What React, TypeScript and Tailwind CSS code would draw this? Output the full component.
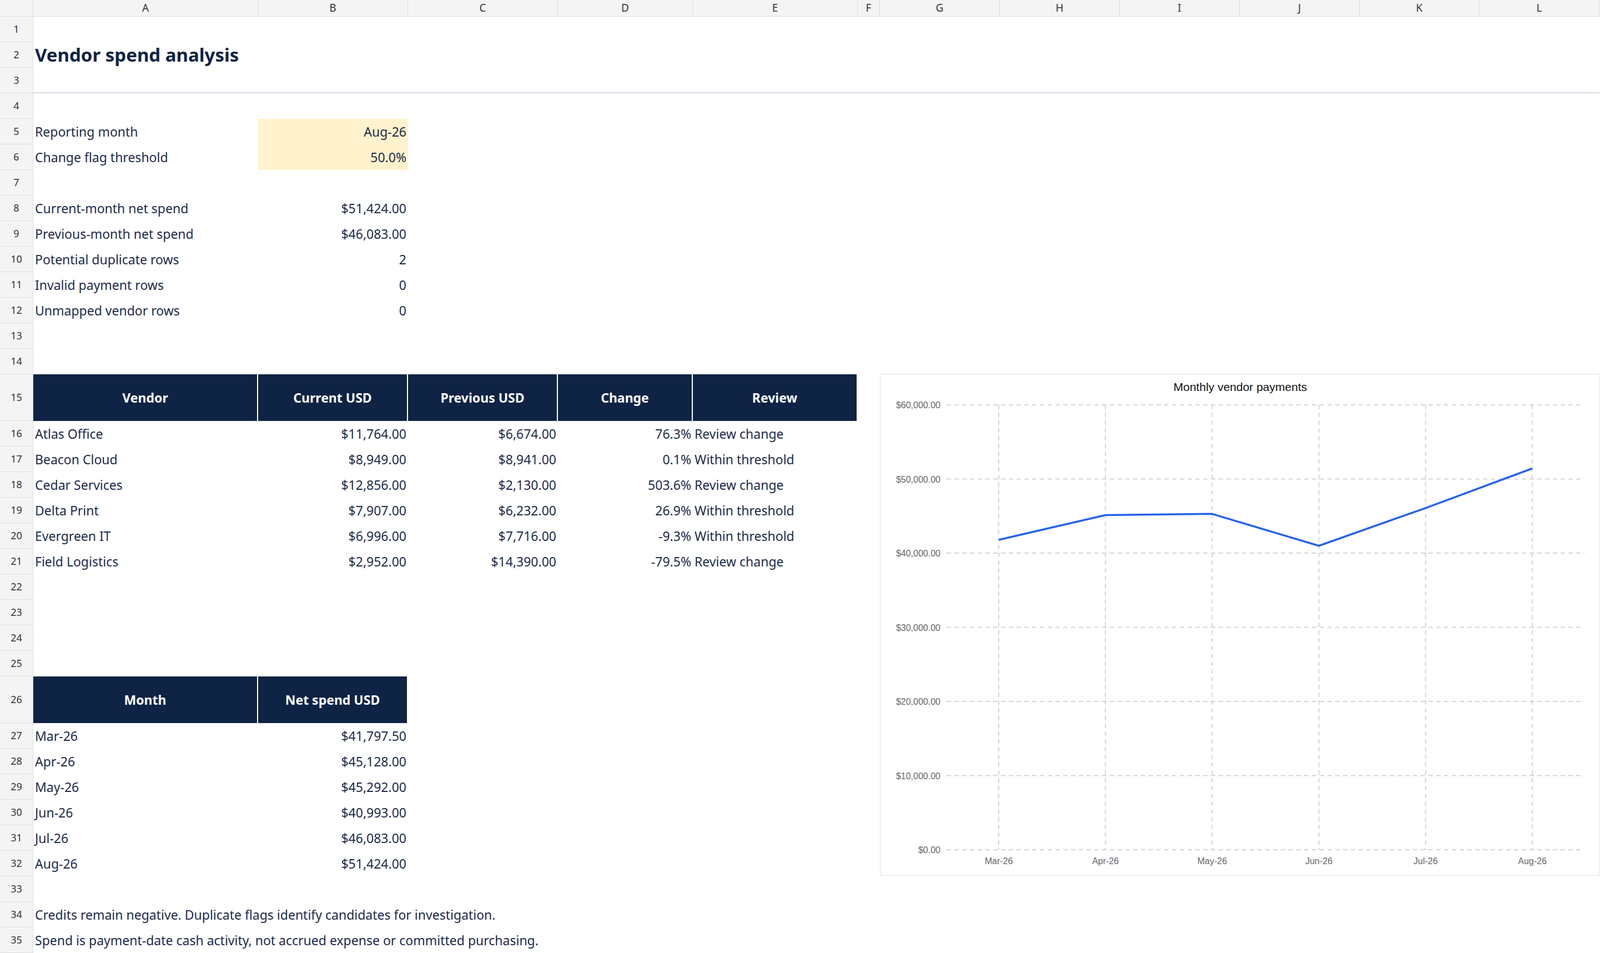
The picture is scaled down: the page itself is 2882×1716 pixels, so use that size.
const COLS = [405, 270, 270, 243, 297, 40, 216, 216, 216, 216, 216, 216];
const LETTERS = ['A', 'B', 'C', 'D', 'E', 'F', 'G', 'H', 'I', 'J', 'K', 'L'];

type Cell = { text?: string; align?: 'l' | 'r' | 'c'; kind?: 'title' | 'head' | 'input' };
type Row = { h?: number; cells: Cell[]; rule?: boolean };

const r = (...cells: (string | Cell | undefined)[]): Cell[] =>
  cells.map((c) => (typeof c === 'string' ? { text: c } : c ?? {}));
const num = (t: string): Cell => ({ text: t, align: 'r' });
const head = (t: string): Cell => ({ text: t, kind: 'head' });

const vendors = [
  ['Atlas Office', '$11,764.00', '$6,674.00', '76.3%', 'Review change'],
  ['Beacon Cloud', '$8,949.00', '$8,941.00', '0.1%', 'Within threshold'],
  ['Cedar Services', '$12,856.00', '$2,130.00', '503.6%', 'Review change'],
  ['Delta Print', '$7,907.00', '$6,232.00', '26.9%', 'Within threshold'],
  ['Evergreen IT', '$6,996.00', '$7,716.00', '-9.3%', 'Within threshold'],
  ['Field Logistics', '$2,952.00', '$14,390.00', '-79.5%', 'Review change'],
];
const months: [string, number][] = [
  ['Mar-26', 41797.5], ['Apr-26', 45128], ['May-26', 45292],
  ['Jun-26', 40993], ['Jul-26', 46083], ['Aug-26', 51424],
];
const fmt = (v: number) => '$' + v.toLocaleString('en-US', { minimumFractionDigits: 2 });

const rows: Row[] = [
  { cells: [] },
  { cells: r({ text: 'Vendor spend analysis', kind: 'title' }) },
  { cells: [], rule: true },
  { cells: [] },
  { cells: r('Reporting month', { text: 'Aug-26', align: 'r', kind: 'input' }) },
  { cells: r('Change flag threshold', { text: '50.0%', align: 'r', kind: 'input' }) },
  { cells: [] },
  { cells: r('Current-month net spend', num('$51,424.00')) },
  { cells: r('Previous-month net spend', num('$46,083.00')) },
  { cells: r('Potential duplicate rows', num('2')) },
  { cells: r('Invalid payment rows', num('0')) },
  { cells: r('Unmapped vendor rows', num('0')) },
  { cells: [] },
  { cells: [] },
  { h: 84, cells: r(head('Vendor'), head('Current USD'), head('Previous USD'), head('Change'), head('Review')) },
  ...vendors.map((v) => ({ cells: r(v[0], num(v[1]), num(v[2]), num(v[3]), v[4]) })),
  { cells: [] },
  { cells: [] },
  { cells: [] },
  { cells: [] },
  { h: 84, cells: r(head('Month'), head('Net spend USD')) },
  ...months.map(([m, v]) => ({ cells: r(m, num(fmt(v))) })),
  { cells: [] },
  { cells: r('Credits remain negative. Duplicate flags identify candidates for investigation.') },
  { cells: r('Spend is payment-date cash activity, not accrued expense or committed purchasing.') },
];

function Chart() {
  const left = 119, right = 1268, top = 55, bottom = 856;
  const x0 = 213, step = 192.2;
  const y = (v: number) => bottom - (v / 60000) * (bottom - top);
  const ticks = [0, 10000, 20000, 30000, 40000, 50000, 60000];
  const pts = months.map(([, v], i) => `${x0 + i * step},${y(v)}`).join(' ');
  return (
    <div className="absolute left-[1585px] top-[673px] w-[1297px] h-[904px] bg-white border border-[#e3e3e3]">
      <svg width="1297" height="904" className="block">
        <text x="648" y="30" textAnchor="middle" fontSize="21" fill="#111" fontFamily="Liberation Sans, Arial, sans-serif">
          Monthly vendor payments
        </text>
        {ticks.map((t) => (
          <g key={t}>
            <line x1={left} x2={right} y1={y(t)} y2={y(t)} stroke="#d4d4d4" strokeWidth="2" strokeDasharray="8 6" />
            <text x="108" y={y(t) + 6} textAnchor="end" fontSize="16" fill="#666" fontFamily="Liberation Sans, Arial, sans-serif">
              {fmt(t)}
            </text>
          </g>
        ))}
        {months.map(([m], i) => (
          <g key={m}>
            <line x1={x0 + i * step} x2={x0 + i * step} y1={top} y2={bottom} stroke="#d4d4d4" strokeWidth="2" strokeDasharray="8 6" />
            <text x={x0 + i * step} y="882" textAnchor="middle" fontSize="16" fill="#666" fontFamily="Liberation Sans, Arial, sans-serif">
              {m}
            </text>
          </g>
        ))}
        <polyline points={pts} fill="none" stroke="#2563eb" strokeWidth="3.5" strokeLinejoin="round" />
      </svg>
    </div>
  );
}

export default function App() {
  return (
    <div className="relative w-[2882px] h-[1716px] bg-white overflow-hidden font-['Liberation_Sans',Arial,sans-serif] text-[#1c2b4a]">
      <div className="flex h-[30px] bg-[#f4f4f4] border-b border-[#dedede]">
        <div className="w-[60px] shrink-0 border-r border-[#dedede]" />
        {LETTERS.map((l, i) => (
          <div key={l} style={{ width: COLS[i] }} className="shrink-0 flex items-center justify-center text-[19px] text-[#333] border-r border-[#dedede]">
            {l}
          </div>
        ))}
      </div>
      {rows.map((row, ri) => (
        <div key={ri} className={`flex ${row.h === 84 ? 'h-[84px]' : 'h-[46px]'}`}>
          <div className="w-[60px] shrink-0 flex items-center justify-center bg-[#f4f4f4] border-r border-b border-[#dedede] text-[18px] text-[#333]">
            {ri + 1}
          </div>
          {COLS.map((w, ci) => {
            const c = row.cells[ci];
            const base = 'shrink-0 flex items-center px-[3px] whitespace-nowrap';
            let cls = `${base} text-[23px]`;
            if (c?.kind === 'title') cls = `${base} text-[33px] font-bold text-[#0f2344] overflow-visible`;
            else if (c?.kind === 'head') cls = `${base} justify-center bg-[#0f2344] text-white font-bold text-[23px] border-r-2 border-white`;
            else if (c?.kind === 'input') cls = `${base} justify-end bg-[#fff2cc] text-[23px]`;
            else if (c?.align === 'r') cls = `${base} justify-end text-[23px]`;
            if (row.rule) cls += ' border-b-2 border-[#d5dde8]';
            return (
              <div key={ci} style={{ width: w }} className={cls}>
                {c?.text}
              </div>
            );
          })}
        </div>
      ))}
      <Chart />
    </div>
  );
}
